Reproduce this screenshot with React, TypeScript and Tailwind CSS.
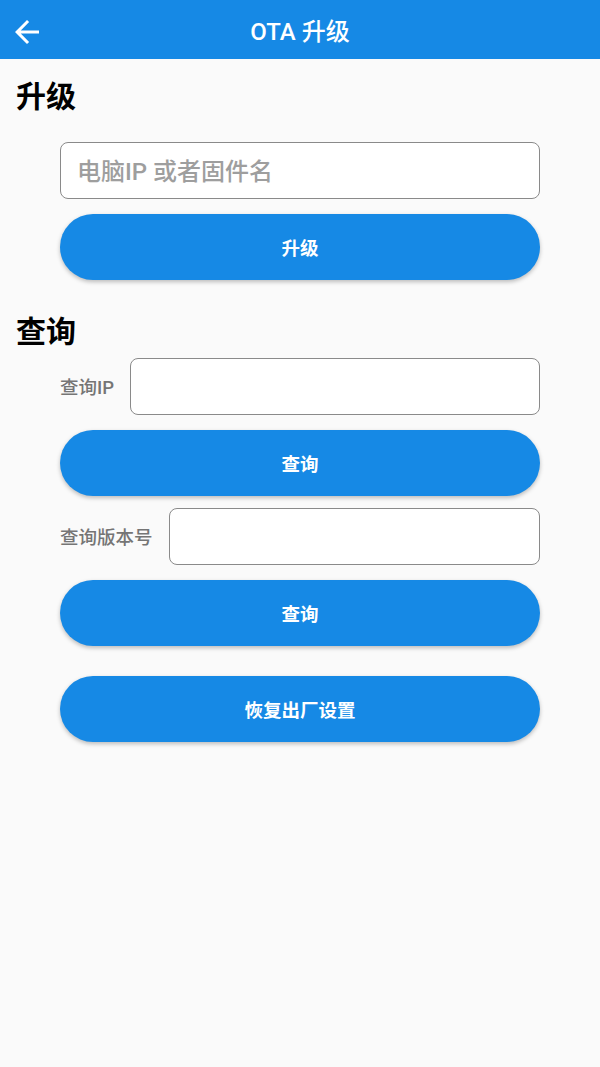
import { useState } from 'react'

const font = { fontFamily: 'Roboto, "Noto Sans CJK SC", sans-serif' }

function BackArrow() {
  return (
    <svg width="36" height="36" viewBox="0 0 24 24" fill="white" aria-hidden="true">
      <path d="M20 11H7.83l5.59-5.59L12 4l-8 8 8 8 1.41-1.41L7.83 13H20v-2z" />
    </svg>
  )
}

function PillButton({ label }: { label: string }) {
  return (
    <button className="w-full h-[66px] pt-[5px] rounded-full bg-[#1689E5] text-white text-[18.5px] font-bold shadow-[0_2px_4px_rgba(0,0,0,0.25)]">
      {label}
    </button>
  )
}

function Field({ value, onChange, placeholder }: { value: string; onChange: (v: string) => void; placeholder?: string }) {
  return (
    <input
      value={value}
      onChange={(e) => onChange(e.target.value)}
      placeholder={placeholder}
      className="flex-1 min-w-0 h-[57px] rounded-lg border border-[#8a8a8a] bg-white px-4 pt-[2px] text-[24px] font-medium text-[#222] placeholder:text-[#9e9e9e] outline-none"
    />
  )
}

export default function App() {
  const [fw, setFw] = useState('')
  const [ip, setIp] = useState('')
  const [ver, setVer] = useState('')

  return (
    <div className="w-[600px] min-h-[1067px] bg-[#fafafa]" style={font}>
      <header className="relative h-[59px] bg-[#1689E5] flex items-center justify-center">
        <button className="absolute left-[9px] top-[14px]">
          <BackArrow />
        </button>
        <h1 className="pt-[5px] text-white text-[24px] font-medium leading-none">OTA 升级</h1>
      </header>

      <main>
        <h2 className="px-4 mt-[23px] h-[30px] text-[30px] leading-[30px] font-bold text-black">升级</h2>
        <div className="px-[60px] mt-[30px] flex flex-col gap-[15px]">
          <div className="flex">
            <Field value={fw} onChange={setFw} placeholder="电脑IP 或者固件名" />
          </div>
          <PillButton label="升级" />
        </div>

        <h2 className="px-4 mt-[37px] h-[30px] text-[30px] leading-[30px] font-bold text-black">查询</h2>
        <div className="px-[60px] mt-[11px] flex flex-col">
          <div className="flex items-center gap-4">
            <span className="pt-[5px] text-[18.5px] font-medium text-[#757575]">查询IP</span>
            <Field value={ip} onChange={setIp} />
          </div>
          <div className="mt-[15px]">
            <PillButton label="查询" />
          </div>
          <div className="mt-[12px] flex items-center gap-4">
            <span className="pt-[5px] text-[18.5px] font-medium text-[#757575]">查询版本号</span>
            <Field value={ver} onChange={setVer} />
          </div>
          <div className="mt-[15px]">
            <PillButton label="查询" />
          </div>
          <div className="mt-[30px]">
            <PillButton label="恢复出厂设置" />
          </div>
        </div>
      </main>
    </div>
  )
}
